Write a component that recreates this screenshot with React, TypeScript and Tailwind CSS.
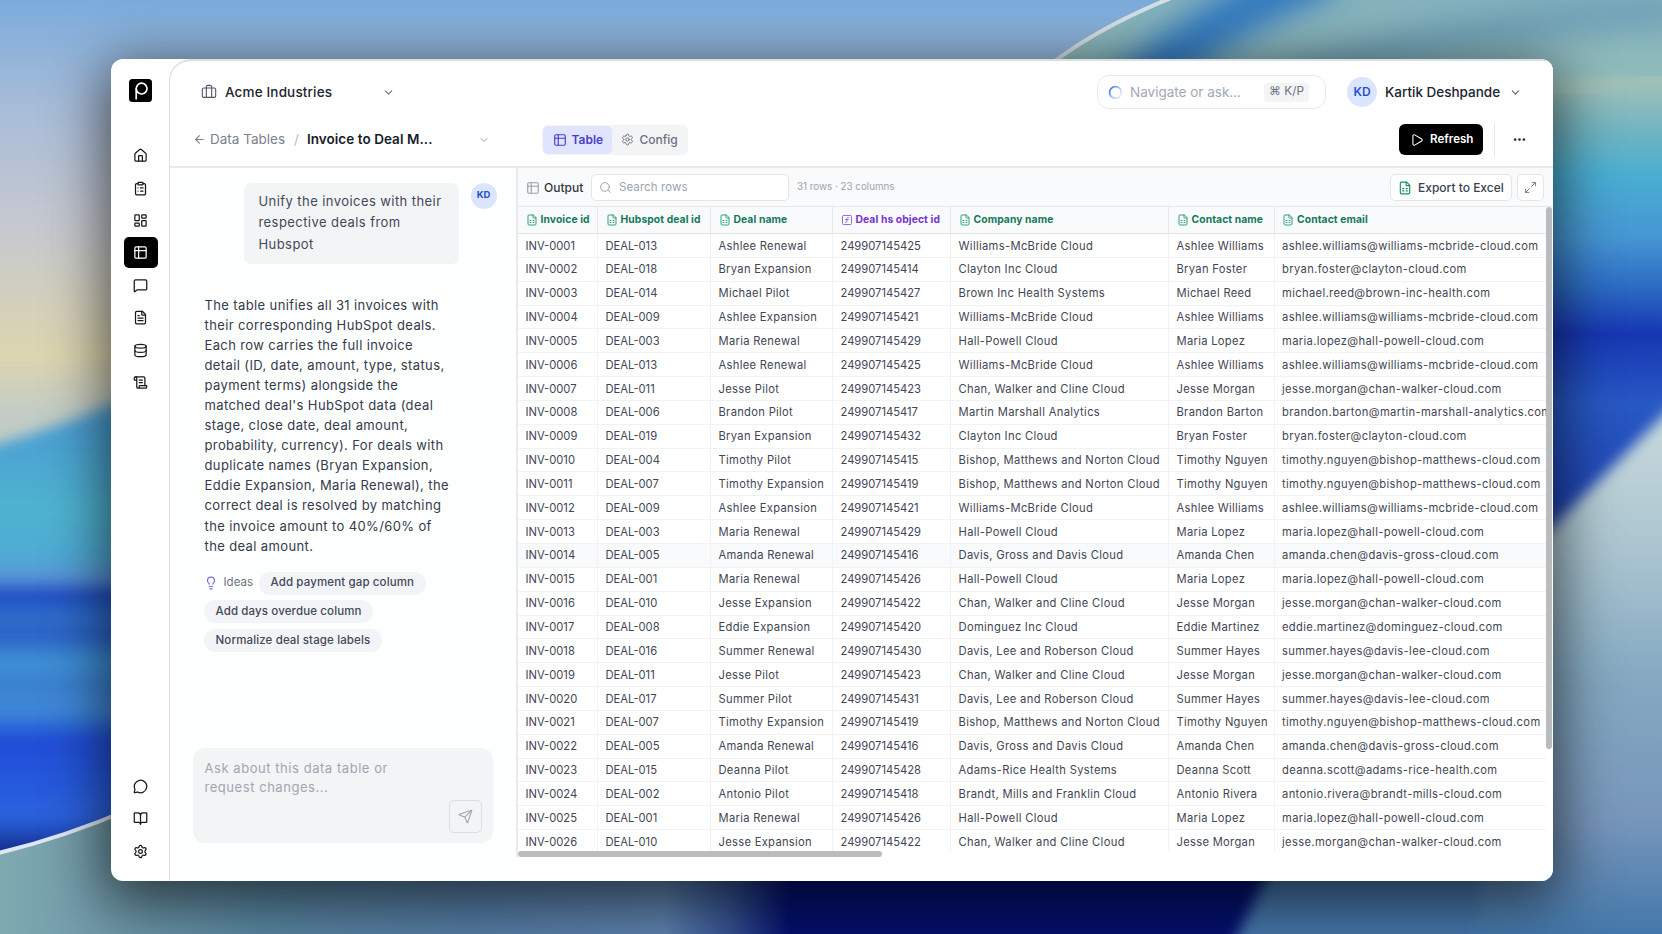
import type { ReactNode } from "react";
import {
  ArrowLeft,
  BookOpen,
  Briefcase,
  ChevronDown,
  ClipboardList,
  Database,
  Ellipsis,
  FileSpreadsheet,
  FileText,
  House,
  LayoutDashboard,
  Lightbulb,
  Maximize2,
  MessageCircle,
  MessageSquare,
  Play,
  ScrollText,
  Search,
  Send,
  Settings,
  SquareFunction,
} from "lucide-react";

type Deal = [name: string, objectId: string, company: string, contact: string, email: string];

const deals: Record<string, Deal> = {
  "001": ["Maria Renewal", "249907145426", "Hall-Powell Cloud", "Maria Lopez", "maria.lopez@hall-powell-cloud.com"],
  "002": ["Antonio Pilot", "249907145418", "Brandt, Mills and Franklin Cloud", "Antonio Rivera", "antonio.rivera@brandt-mills-cloud.com"],
  "003": ["Maria Renewal", "249907145429", "Hall-Powell Cloud", "Maria Lopez", "maria.lopez@hall-powell-cloud.com"],
  "004": ["Timothy Pilot", "249907145415", "Bishop, Matthews and Norton Cloud", "Timothy Nguyen", "timothy.nguyen@bishop-matthews-cloud.com"],
  "005": ["Amanda Renewal", "249907145416", "Davis, Gross and Davis Cloud", "Amanda Chen", "amanda.chen@davis-gross-cloud.com"],
  "006": ["Brandon Pilot", "249907145417", "Martin Marshall Analytics", "Brandon Barton", "brandon.barton@martin-marshall-analytics.com"],
  "007": ["Timothy Expansion", "249907145419", "Bishop, Matthews and Norton Cloud", "Timothy Nguyen", "timothy.nguyen@bishop-matthews-cloud.com"],
  "008": ["Eddie Expansion", "249907145420", "Dominguez Inc Cloud", "Eddie Martinez", "eddie.martinez@dominguez-cloud.com"],
  "009": ["Ashlee Expansion", "249907145421", "Williams-McBride Cloud", "Ashlee Williams", "ashlee.williams@williams-mcbride-cloud.com"],
  "010": ["Jesse Expansion", "249907145422", "Chan, Walker and Cline Cloud", "Jesse Morgan", "jesse.morgan@chan-walker-cloud.com"],
  "011": ["Jesse Pilot", "249907145423", "Chan, Walker and Cline Cloud", "Jesse Morgan", "jesse.morgan@chan-walker-cloud.com"],
  "013": ["Ashlee Renewal", "249907145425", "Williams-McBride Cloud", "Ashlee Williams", "ashlee.williams@williams-mcbride-cloud.com"],
  "014": ["Michael Pilot", "249907145427", "Brown Inc Health Systems", "Michael Reed", "michael.reed@brown-inc-health.com"],
  "015": ["Deanna Pilot", "249907145428", "Adams-Rice Health Systems", "Deanna Scott", "deanna.scott@adams-rice-health.com"],
  "016": ["Summer Renewal", "249907145430", "Davis, Lee and Roberson Cloud", "Summer Hayes", "summer.hayes@davis-lee-cloud.com"],
  "017": ["Summer Pilot", "249907145431", "Davis, Lee and Roberson Cloud", "Summer Hayes", "summer.hayes@davis-lee-cloud.com"],
  "018": ["Bryan Expansion", "249907145414", "Clayton Inc Cloud", "Bryan Foster", "bryan.foster@clayton-cloud.com"],
  "019": ["Bryan Expansion", "249907145432", "Clayton Inc Cloud", "Bryan Foster", "bryan.foster@clayton-cloud.com"],
};

// deal of each invoice, INV-0001 onwards
const invoiceDeals = [
  "013", "018", "014", "009", "003", "013", "011", "006", "019", "004", "007", "009", "003",
  "005", "001", "010", "008", "016", "011", "017", "007", "005", "015", "002", "001", "010",
];

const columns = [
  { title: "Invoice id", cell: "" },
  { title: "Hubspot deal id", cell: "" },
  { title: "Deal name", cell: "tracking-[0.3px]" },
  { title: "Deal hs object id", cell: "" },
  { title: "Company name", cell: "tracking-[0.33px]" },
  { title: "Contact name", cell: "tracking-[0.3px]" },
  { title: "Contact email", cell: "tracking-[0.35px]" },
];

const message = [
  "The table unifies all 31 invoices with",
  "their corresponding HubSpot deals.",
  "Each row carries the full invoice",
  "detail (ID, date, amount, type, status,",
  "payment terms) alongside the",
  "matched deal's HubSpot data (deal",
  "stage, close date, deal amount,",
  "probability, currency). For deals with",
  "duplicate names (Bryan Expansion,",
  "Eddie Expansion, Maria Renewal), the",
  "correct deal is resolved by matching",
  "the invoice amount to 40%/60% of",
  "the deal amount.",
];

function GridIcon({ size }: { size: number }) {
  return (
    <svg width={size} height={size} viewBox="0 0 24 24" fill="none" stroke="currentColor" strokeWidth="2" strokeLinecap="round">
      <rect x="3" y="3" width="18" height="18" rx="2" />
      <path d="M9 3v18M3 9h18" />
    </svg>
  );
}

function Logo() {
  return (
    <svg width="23" height="23" viewBox="0 0 23 23" fill="none" stroke="#fff" strokeWidth="1.7">
      <rect width="23" height="23" rx="3.5" fill="#000" stroke="none" />
      <circle cx="12.6" cy="9.6" r="5.4" />
      <path d="M7.2 9.6v11" />
    </svg>
  );
}

function Wallpaper() {
  return (
    <svg className="absolute inset-0" width="1662" height="934" viewBox="0 0 1662 934" preserveAspectRatio="none">
      <defs>
        <linearGradient id="sky" x1="0" y1="0" x2="0" y2="1">
          <stop offset="0" stopColor="#7cacdc" />
          <stop offset="0.12" stopColor="#a9bdd8" />
          <stop offset="0.24" stopColor="#c6c8cf" />
          <stop offset="0.38" stopColor="#dcd5b0" />
          <stop offset="0.44" stopColor="#c3ccc4" />
        </linearGradient>
        <linearGradient id="wave" gradientUnits="userSpaceOnUse" x1="0" y1="430" x2="0" y2="860">
          <stop offset="0" stopColor="#4b9fd4" />
          <stop offset="0.19" stopColor="#4fb4cf" />
          <stop offset="0.3" stopColor="#4fa9d6" />
          <stop offset="0.345" stopColor="#5a93d8" />
          <stop offset="0.38" stopColor="#1c48c0" />
          <stop offset="0.43" stopColor="#2f6dcc" />
          <stop offset="0.48" stopColor="#2a62c8" />
          <stop offset="0.54" stopColor="#3f92d6" />
          <stop offset="0.59" stopColor="#3a80d0" />
          <stop offset="0.65" stopColor="#3f8ad8" />
          <stop offset="0.72" stopColor="#1e4cd8" />
          <stop offset="0.9" stopColor="#2c62de" />
          <stop offset="1" stopColor="#0a1f78" />
        </linearGradient>
        <linearGradient id="orb" gradientUnits="userSpaceOnUse" x1="0" y1="0" x2="0" y2="530">
          <stop offset="0" stopColor="#86b3bd" />
          <stop offset="0.18" stopColor="#93bdbb" />
          <stop offset="0.25" stopColor="#6fb4c2" />
          <stop offset="0.33" stopColor="#4aaed2" />
          <stop offset="0.45" stopColor="#4595d3" />
          <stop offset="0.54" stopColor="#2d6cc4" />
          <stop offset="0.63" stopColor="#1636b2" />
          <stop offset="0.76" stopColor="#2758c4" />
          <stop offset="1" stopColor="#1d3fae" />
        </linearGradient>
        <linearGradient id="haze" gradientUnits="userSpaceOnUse" x1="0" y1="420" x2="0" y2="934">
          <stop offset="0" stopColor="#c6d9dc" />
          <stop offset="0.25" stopColor="#abc5d0" />
          <stop offset="0.5" stopColor="#84a9c1" />
          <stop offset="0.78" stopColor="#7796bb" />
          <stop offset="1" stopColor="#4377a9" />
        </linearGradient>
        <linearGradient id="floor" gradientUnits="userSpaceOnUse" x1="0" y1="0" x2="1662" y2="0">
          <stop offset="0" stopColor="#7faab0" />
          <stop offset="0.06" stopColor="#7099a8" />
          <stop offset="0.16" stopColor="#5885a0" />
          <stop offset="0.28" stopColor="#557ca4" />
          <stop offset="0.4" stopColor="#5c80ac" />
          <stop offset="0.44" stopColor="#33508f" />
          <stop offset="0.475" stopColor="#04106c" />
          <stop offset="1" stopColor="#04106c" />
        </linearGradient>
        <filter id="soft"><feGaussianBlur stdDeviation="7" /></filter>
        <filter id="softer" x="-50%" y="-50%" width="200%" height="200%"><feGaussianBlur stdDeviation="16" /></filter>
        <clipPath id="orbClip"><path d="M1032 80Q1090 30 1178 -4H1700V620H1032Z" /></clipPath>
      </defs>
      <rect width="1662" height="934" fill="url(#sky)" />
      <path d="M-30 451Q60 430 200 368V900H-30Z" fill="url(#wave)" filter="url(#soft)" />
      <g clipPath="url(#orbClip)">
        <rect x="1020" y="-10" width="660" height="640" fill="url(#orb)" />
        <path d="M1110 110Q1200 20 1330 -30" stroke="#2f77c0" strokeWidth="46" fill="none" filter="url(#softer)" />
        <path d="M1230 110Q1360 30 1680 10" stroke="#6497b4" strokeWidth="22" fill="none" filter="url(#softer)" />
        <path d="M1520 92Q1600 86 1680 78" stroke="#a8c4b4" strokeWidth="10" fill="none" filter="url(#soft)" />
      </g>
      <path d="M1036 76Q1090 30 1176 -4" stroke="#d5dfe6" strokeWidth="4" fill="none" />
      <path d="M-10 854Q60 838 130 808V870H1540V940H-10Z" fill="url(#floor)" />
      <path d="M-10 855Q60 839 130 809" stroke="#dfe7f2" strokeWidth="4" fill="none" />
      <path d="M1225 960L1275 860H1560V960Z" fill="#4575a8" filter="url(#soft)" />
      <path d="M1480 599L1700 379V980H1480Z" fill="url(#haze)" filter="url(#soft)" />
    </svg>
  );
}

function SideItem({ children, active }: { children: ReactNode; active?: boolean }) {
  return (
    <div
      className={
        active
          ? "flex h-[31px] w-[34px] items-center justify-center rounded-[5px] bg-black text-white"
          : "flex h-[31px] w-[34px] items-center justify-center text-[#18181b]"
      }
    >
      {children}
    </div>
  );
}

function Sidebar() {
  return (
    <nav className="flex w-[58px] shrink-0 flex-col items-center pt-[20px] pb-[14.5px] pl-px">
      <Logo />
      <div className="mt-[38.3px] flex flex-col gap-[1.4px]">
        <SideItem><House size={15} /></SideItem>
        <SideItem><ClipboardList size={15} /></SideItem>
        <SideItem><LayoutDashboard size={15} /></SideItem>
        <SideItem active><GridIcon size={15} /></SideItem>
        <SideItem><MessageSquare size={15} /></SideItem>
        <SideItem><FileText size={15} /></SideItem>
        <SideItem><Database size={15} /></SideItem>
        <SideItem><ScrollText size={15} /></SideItem>
      </div>
      <div className="mt-auto flex flex-col gap-[1.3px]">
        <SideItem><MessageCircle size={15} /></SideItem>
        <SideItem><BookOpen size={15} /></SideItem>
        <SideItem><Settings size={15} /></SideItem>
      </div>
    </nav>
  );
}

function TopBar() {
  return (
    <div className="flex h-[62px] items-center pr-[31px] pl-[30.5px]">
      <Briefcase size={16} strokeWidth={1.7} className="text-[#52596b]" />
      <span className="ml-[8.5px] w-[157px] text-[13.5px] font-medium tracking-[0.15px] text-[#20242f]">Acme Industries</span>
      <ChevronDown size={13} className="text-[#6b7280]" />
      <div className="ml-auto flex h-[34px] w-[229px] items-center rounded-[12px] border border-[#e7e8eb] bg-white pr-[16px] pl-[10px]">
        <svg width="15" height="15" viewBox="0 0 16 16" fill="none">
          <defs>
            <linearGradient id="ring" x1="0.1" y1="0.2" x2="0.9" y2="0.8">
              <stop offset="0" stopColor="#4f7fe8" />
              <stop offset="0.5" stopColor="#a9c3f6" />
              <stop offset="1" stopColor="#e4ecfd" />
            </linearGradient>
          </defs>
          <circle cx="8" cy="8" r="6.3" stroke="url(#ring)" strokeWidth="1.9" />
        </svg>
        <span className="ml-[7px] text-[13.5px] text-[#a3a8b3]">Navigate or ask...</span>
        <span className="ml-auto flex h-[19px] w-[45px] items-center justify-center rounded-[4px] bg-[#f3f4f6] text-[11.8px] whitespace-nowrap text-[#6b7280]">
          ⌘ K/P
        </span>
      </div>
      <span className="ml-[21px] flex size-[30px] items-center justify-center rounded-full bg-[#dbe5fd] text-[12px] font-semibold text-[#2450cf]">
        KD
      </span>
      <span className="ml-[8px] w-[115px] text-[13.5px] font-medium whitespace-nowrap text-[#20242f]">Kartik Deshpande</span>
      <ChevronDown size={13} className="ml-[9px] text-[#5b6372]" />
    </div>
  );
}

function TitleBar() {
  return (
    <div className="flex h-[45px] items-center border-b-2 border-[#e9eaed] pb-[10px] pl-[23px] text-[13.5px]">
      <ArrowLeft size={13} className="text-[#7a808c]" />
      <span className="ml-[4px] w-[75px] whitespace-nowrap text-[#7a808c]">Data Tables</span>
      <span className="ml-[9px] text-[#b8bcc4]">/</span>
      <span className="ml-[8px] w-[171px] text-[13.5px] font-semibold tracking-[0.05px] whitespace-nowrap text-[#181c28]">Invoice to Deal M...</span>
      <ChevronDown size={12} className="text-[#9ca3af]" />
      <div className="ml-[52.5px] flex h-[30px] w-[146px] items-center rounded-[6px] bg-[#f3f4f6] p-[1px] text-[12px] font-medium">
        <span className="flex h-[28px] w-[69px] items-center justify-center gap-[5px] rounded-[5px] bg-[#e0e4fe] font-semibold text-[#4a3fc8]">
          <GridIcon size={14} />
          Table
        </span>
        <span className="ml-[9px] flex items-center gap-[5px] text-[#6b7280]">
          <Settings size={13} strokeWidth={1.8} />
          Config
        </span>
      </div>
      <div className="ml-auto flex h-[31px] w-[84px] items-center rounded-[6px] bg-black pl-[11px] text-[11.6px] font-semibold text-white">
        <Play size={14} strokeWidth={1.8} />
        <span className="ml-[6px]">Refresh</span>
      </div>
      <div className="ml-[11px] h-[34px] w-px bg-[#e5e7eb]" />
      <Ellipsis size={15} strokeWidth={2.4} className="mr-[26px] ml-[17px] text-[#30343e]" />
    </div>
  );
}

function Chip({ children }: { children: ReactNode }) {
  return (
    <span className="inline-flex h-[23px] items-center rounded-full bg-[#f3f4f7] px-[11.5px] text-[11.5px] font-medium tracking-[0.13px] whitespace-nowrap text-[#424958]">
      {children}
    </span>
  );
}

function ChatPanel() {
  return (
    <section className="flex w-[346px] shrink-0 flex-col bg-[#fdfefe] pb-[38px] pl-[23px]">
      <div className="mt-[14.5px] ml-[50.5px] flex">
        <p className="h-[81px] w-[215px] rounded-[7px] bg-[#f3f4f6] px-[15px] pt-[8px] text-[13px] leading-[21.7px] tracking-[0.43px] whitespace-nowrap text-[#424958]">
          Unify the invoices with their
          <br />
          respective deals from
          <br />
          Hubspot
        </p>
        <span className="ml-[12px] flex size-[26px] items-center justify-center rounded-full bg-[#dbe5fd] text-[9.5px] font-bold text-[#2450cf]">
          KD
        </span>
      </div>
      <p className="mt-[31.5px] ml-[11.5px] text-[13px] leading-[20.04px] tracking-[0.38px] whitespace-nowrap text-[#343b4a]">
        {message.map((line) => (
          <span key={line} className="block">{line}</span>
        ))}
      </p>
      <div className="mt-[16px] ml-[11px] flex flex-col items-start gap-[5.6px]">
        <div className="flex items-center">
          <Lightbulb size={14} className="text-[#7c6fe6]" />
          <span className="ml-[5.5px] w-[35.5px] text-[11.5px] text-[#6b7280]">Ideas</span>
          <Chip>Add payment gap column</Chip>
        </div>
        <Chip>Add days overdue column</Chip>
        <Chip>Normalize deal stage labels</Chip>
      </div>
      <div className="mt-auto flex h-[95.5px] w-[300px] justify-between rounded-[12px] bg-[#f3f4f6] pr-[11.5px] pl-[11.5px]">
        <p className="pt-[11px] text-[13px] leading-[19.2px] tracking-[0.55px] whitespace-nowrap text-[#a0a6b1]">
          Ask about this data table or
          <br />
          request changes...
        </p>
        <div className="mb-[10px] flex size-[33px] items-center justify-center self-end rounded-[5px] border border-[#dcdee2] text-[#a0a6b1]">
          <Send size={15} strokeWidth={1.8} />
        </div>
      </div>
    </section>
  );
}

function TableToolbar() {
  return (
    <div className="flex h-[39px] shrink-0 items-center border-b border-[#e5e7eb] bg-[#f9fafc] pt-px pr-[9px] pl-[8px]">
      <span className="text-[#9aa0ab]"><GridIcon size={14} /></span>
      <span className="ml-[4px] w-[47px] text-[12px] font-medium text-[#30363f]">Output</span>
      <div className="flex h-[27px] w-[198px] items-center rounded-[5px] border border-[#e3e5e9] bg-white pl-[7px] text-[11.5px] tracking-[0.08px] text-[#9ca3af]">
        <Search size={13} strokeWidth={1.8} />
        <span className="ml-[7px]">Search rows</span>
      </div>
      <span className="ml-[8px] text-[9.8px] text-[#9ca3af]">31 rows · 23 columns</span>
      <div className="ml-auto flex h-[27px] w-[122px] items-center rounded-[5px] border border-[#e3e5e9] bg-white pl-[7px] text-[12px] font-medium whitespace-nowrap text-[#3a4150]">
        <FileSpreadsheet size={14} className="text-[#159467]" />
        <span className="ml-[6px]">Export to Excel</span>
      </div>
      <div className="ml-[5px] flex size-[27px] items-center justify-center rounded-[5px] border border-[#e3e5e9] bg-white text-[#6b7280]">
        <Maximize2 size={13} strokeWidth={1.7} />
      </div>
    </div>
  );
}

const gridCols = "grid grid-cols-[80px_113px_122px_118px_218px_105.5px_271.5px]";

function DataTable() {
  return (
    <div className="flex h-[650px] flex-col">
      <div className="flex h-[644px]">
        <div className="w-[1028px] shrink-0 overflow-hidden">
          <div className={`${gridCols} h-[27px] border-b border-[#e2e4e8] bg-[#f9fafc]`}>
            {columns.map(({ title }, i) => (
              <div
                key={title}
                className={`flex items-center gap-[3px] pl-[7.5px] text-[10.3px] font-bold tracking-[0.1px] whitespace-nowrap ${
                  i === 3 ? "text-[#7433cf]" : "text-[#15795a]"
                } ${i < 6 ? "border-r border-[#e5e7eb]" : ""}`}
              >
                {i === 3 ? (
                  <SquareFunction size={12} className="shrink-0 text-[#9a6be0]" />
                ) : (
                  <FileSpreadsheet size={12} className="shrink-0 text-[#2fa37b]" />
                )}
                {title}
              </div>
            ))}
          </div>
          {invoiceDeals.map((id, row) => (
            <div
              key={row}
              className={`${gridCols} h-[23.85px] border-b border-[#f1f2f4] text-[11.2px] ${row === 13 ? "bg-[#f9fafb]" : ""}`}
            >
              {[`INV-${String(row + 1).padStart(4, "0")}`, `DEAL-${id}`, ...deals[id]].map((value, i) => (
                <div
                  key={i}
                  className={`flex items-center overflow-hidden pt-px pl-[7.5px] whitespace-nowrap text-[#3f4654] ${columns[i].cell} ${
                    i < 6 ? "border-r border-[#f1f2f4]" : ""
                  }`}
                >
                  {value}
                </div>
              ))}
            </div>
          ))}
        </div>
        <div className="h-[542px] w-[6px] rounded-full bg-[#b9bbbc]" />
      </div>
      <div className="h-[6px] w-[364px] rounded-full bg-[#bcbcbc]" />
    </div>
  );
}

export default function App() {
  return (
    <div className="relative h-[934px] w-[1662px] overflow-hidden bg-[#4575a8] font-['Inter','Liberation_Sans',sans-serif]">
      <Wallpaper />
      <div className="relative flex h-full w-full pt-[59px] pl-[111px]">
        <div className="flex h-[822px] w-[1442px] overflow-hidden rounded-[12px] bg-white shadow-[0_14px_56px_8px_rgba(0,0,0,0.6)]">
          <Sidebar />
          <main className="flex min-w-0 flex-1 flex-col rounded-tl-[22px] border-t-2 border-l border-[#dcdee1] bg-white">
            <TopBar />
            <TitleBar />
            <div className="flex min-h-0 flex-1">
              <ChatPanel />
              <section className="flex h-[689px] min-w-0 flex-1 flex-col border-l-2 border-[#e8eaee]">
                <TableToolbar />
                <DataTable />
              </section>
            </div>
          </main>
        </div>
      </div>
    </div>
  );
}
